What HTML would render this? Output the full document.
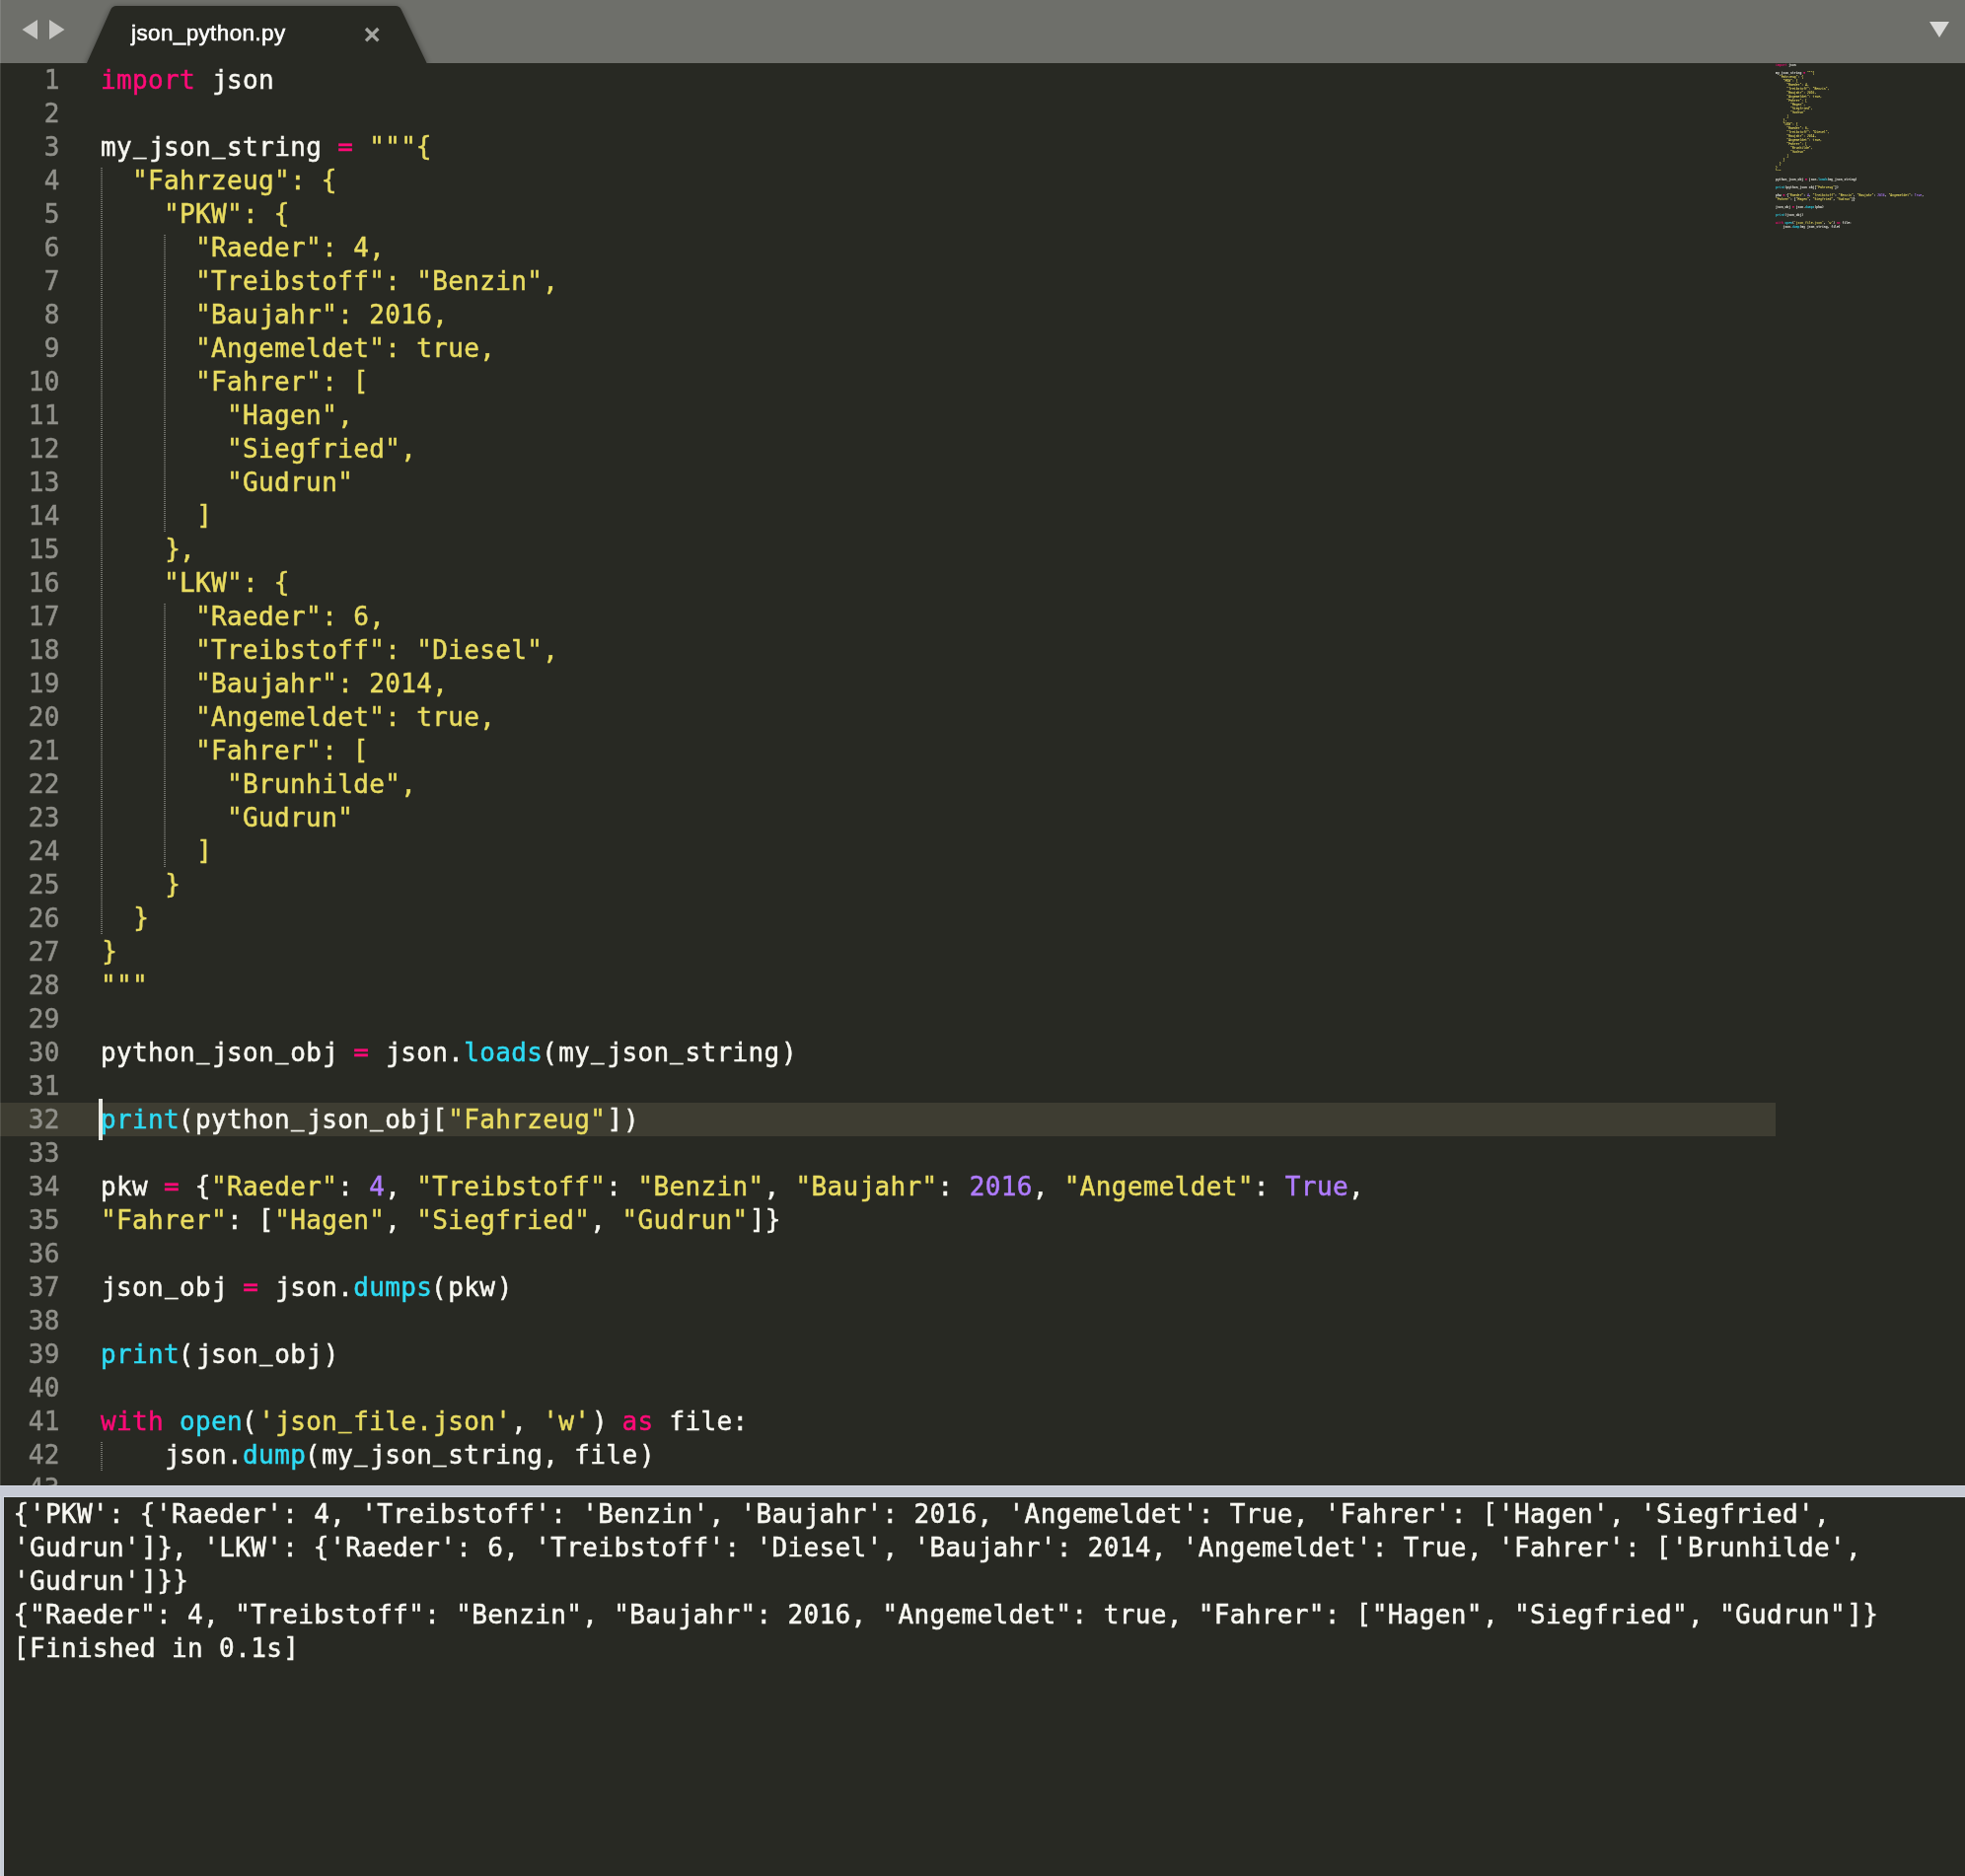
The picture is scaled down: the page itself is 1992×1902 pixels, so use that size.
<!DOCTYPE html>
<html><head><meta charset="utf-8"><title>json_python.py</title>
<style>
html,body{margin:0;padding:0}
body{width:1992px;height:1902px;background:#282923;overflow:hidden;position:relative;font-family:"DejaVu Sans Mono","Liberation Mono",monospace;}
#tabbar{position:absolute;left:0;top:0;width:1992px;height:64px;background:#6e6f6a}
#tabsvg{position:absolute;left:0;top:0}
#title{position:absolute;left:132.6px;letter-spacing:0.42px;top:19px;-webkit-text-stroke:0.55px;will-change:transform;font-family:"Liberation Sans",sans-serif;font-size:22.4px;line-height:30px;color:#fff;white-space:pre}
#editor{position:absolute;left:0;top:64px;width:1992px;height:1442px;overflow:hidden;background:#282923}
.mono{font-size:26px;line-height:34px;letter-spacing:0.3557px;color:#f8f8f2;-webkit-text-stroke:0.5px;will-change:transform}
.l{height:34px;white-space:pre}
#hl{position:absolute;left:0;top:1054px;width:1800px;height:34px;background:#3e3d32}
#nums{position:absolute;left:0;top:0;width:60.85px;text-align:right;color:#90908a}
#code{position:absolute;left:102px;top:0}
.l i,.l em{font-style:normal;position:relative;top:-1.2px;left:-0.4px}
.l em{left:1.2px}
.l u{text-decoration:none;display:inline-block;transform:translateY(-2.8px) scaleX(0.86)}
.l b{font-weight:normal;position:relative;left:1.1px}
.l s,.l var{text-decoration:none;font-style:normal;position:relative;left:-1.2px}
.l var{left:1.5px}
.k{color:#ff0a78}.s{color:#e9dc60}.f{color:#2edbf4}.n{color:#b07cff}
.g{position:absolute;width:2px;background:repeating-linear-gradient(to bottom,#70716b 0,#70716b 1px,transparent 1px,transparent 2px)}
#cursor{position:absolute;left:100px;top:1114px;width:4px;height:42px;background:#e8e8e1}
#mini{position:absolute;left:1800px;top:64px;transform-origin:0 0;transform:scale(0.1172,0.1176)}
#band{position:absolute;left:0;top:1506px;width:1992px;height:12px;background:#c7cbd5;box-sizing:border-box;border-top:1px solid #d2d7e1;border-bottom:1px solid #d2d7e1}
#strip{position:absolute;left:0;top:1517px;width:4px;height:385px;background:#c7cbd5;box-sizing:border-box;border-right:1px solid #d2d7e1;border-left:1px solid #ccd1d8}
#out{position:absolute;left:14px;top:1518px}
#edge{position:absolute;left:0;top:0;width:1px;height:1506px;background:rgba(255,255,255,0.12)}
</style></head><body>
<div id="tabbar"></div>
<svg id="tabsvg" width="1992" height="64" viewBox="0 0 1992 64">
<defs><filter id="sh" x="-5%" y="-20%" width="110%" height="140%"><feGaussianBlur stdDeviation="2.5"/></filter></defs>
<path d="M86 66 L110 12 Q113 6 120 6 L399 6 Q406 6 409 12 L435 66 Z" fill="#000" opacity="0.28" filter="url(#sh)"/>
<path d="M88 64 L112.4 9.6 Q114 6 118 6 L401 6 Q405 6 406.6 9.6 L432.6 64 Z" fill="#282923"/>
<path d="M22.5 30 L38 20 L38 40 Z" fill="#c5c5c2"/>
<path d="M65.5 30 L50 20 L50 40 Z" fill="#c5c5c2"/>
<path d="M1956 22 L1976 22 L1966 38 Z" fill="#d9d9d7"/>
<path d="M371 29 L383.4 41.4 M383.4 29 L371 41.4" stroke="#a3a49f" stroke-width="3.3" fill="none"/>
</svg>
<div id="title">json_python.py</div>
<div id="editor">
<div id="hl"></div>
<div id="nums" class="mono">
<div class="l">1</div>
<div class="l">2</div>
<div class="l">3</div>
<div class="l">4</div>
<div class="l">5</div>
<div class="l">6</div>
<div class="l">7</div>
<div class="l">8</div>
<div class="l">9</div>
<div class="l">10</div>
<div class="l">11</div>
<div class="l">12</div>
<div class="l">13</div>
<div class="l">14</div>
<div class="l">15</div>
<div class="l">16</div>
<div class="l">17</div>
<div class="l">18</div>
<div class="l">19</div>
<div class="l">20</div>
<div class="l">21</div>
<div class="l">22</div>
<div class="l">23</div>
<div class="l">24</div>
<div class="l">25</div>
<div class="l">26</div>
<div class="l">27</div>
<div class="l">28</div>
<div class="l">29</div>
<div class="l">30</div>
<div class="l">31</div>
<div class="l">32</div>
<div class="l">33</div>
<div class="l">34</div>
<div class="l">35</div>
<div class="l">36</div>
<div class="l">37</div>
<div class="l">38</div>
<div class="l">39</div>
<div class="l">40</div>
<div class="l">41</div>
<div class="l">42</div>
<div class="l">43</div>
</div>
<div id="code" class="mono">
<div class="l"><span class="k">import</span> <b>j</b>son</div>
<div class="l">&nbsp;</div>
<div class="l">my<u>_</u><b>j</b>son<u>_</u>string <span class="k">=</span> <span class="s">"""<i>{</i></span></div>
<div class="l"><span class="s">  "Fahrzeug": <i>{</i></span></div>
<div class="l"><span class="s">    "PKW": <i>{</i></span></div>
<div class="l"><span class="s">      "Raeder": 4,</span></div>
<div class="l"><span class="s">      "Treibstoff": "Benzin",</span></div>
<div class="l"><span class="s">      "Bau<b>j</b>ahr": 2016,</span></div>
<div class="l"><span class="s">      "Angemeldet": true,</span></div>
<div class="l"><span class="s">      "Fahrer": <i>[</i></span></div>
<div class="l"><span class="s">        "Hagen",</span></div>
<div class="l"><span class="s">        "Siegfried",</span></div>
<div class="l"><span class="s">        "Gudrun"</span></div>
<div class="l"><span class="s">      <em>]</em></span></div>
<div class="l"><span class="s">    <em>}</em>,</span></div>
<div class="l"><span class="s">    "LKW": <i>{</i></span></div>
<div class="l"><span class="s">      "Raeder": 6,</span></div>
<div class="l"><span class="s">      "Treibstoff": "Diesel",</span></div>
<div class="l"><span class="s">      "Bau<b>j</b>ahr": 2014,</span></div>
<div class="l"><span class="s">      "Angemeldet": true,</span></div>
<div class="l"><span class="s">      "Fahrer": <i>[</i></span></div>
<div class="l"><span class="s">        "Brunhilde",</span></div>
<div class="l"><span class="s">        "Gudrun"</span></div>
<div class="l"><span class="s">      <em>]</em></span></div>
<div class="l"><span class="s">    <em>}</em></span></div>
<div class="l"><span class="s">  <em>}</em></span></div>
<div class="l"><span class="s"><em>}</em></span></div>
<div class="l"><span class="s">"""</span></div>
<div class="l">&nbsp;</div>
<div class="l">python<u>_</u><b>j</b>son<u>_</u>ob<b>j</b> <span class="k">=</span> <b>j</b>son.<span class="f">loads</span><s>(</s>my<u>_</u><b>j</b>son<u>_</u>string<var>)</var></div>
<div class="l">&nbsp;</div>
<div class="l"><span class="f">print</span><s>(</s>python<u>_</u><b>j</b>son<u>_</u>ob<b>j</b><i>[</i><span class="s">"Fahrzeug"</span><em>]</em><var>)</var></div>
<div class="l">&nbsp;</div>
<div class="l">pkw <span class="k">=</span> <i>{</i><span class="s">"Raeder"</span>: <span class="n">4</span>, <span class="s">"Treibstoff"</span>: <span class="s">"Benzin"</span>, <span class="s">"Bau<b>j</b>ahr"</span>: <span class="n">2016</span>, <span class="s">"Angemeldet"</span>: <span class="n">True</span>,</div>
<div class="l"><span class="s">"Fahrer"</span>: <i>[</i><span class="s">"Hagen"</span>, <span class="s">"Siegfried"</span>, <span class="s">"Gudrun"</span><em>]}</em></div>
<div class="l">&nbsp;</div>
<div class="l"><b>j</b>son<u>_</u>ob<b>j</b> <span class="k">=</span> <b>j</b>son.<span class="f">dumps</span><s>(</s>pkw<var>)</var></div>
<div class="l">&nbsp;</div>
<div class="l"><span class="f">print</span><s>(</s><b>j</b>son<u>_</u>ob<b>j</b><var>)</var></div>
<div class="l">&nbsp;</div>
<div class="l"><span class="k">with</span> <span class="f">open</span><s>(</s><span class="s">'<b>j</b>son<u>_</u>file.<b>j</b>son'</span>, <span class="s">'w'</span><var>)</var> <span class="k">as</span> file:</div>
<div class="l">    <b>j</b>son.<span class="f">dump</span><s>(</s>my<u>_</u><b>j</b>son<u>_</u>string, file<var>)</var></div>
<div class="l">&nbsp;</div>
</div>
</div>
<div class="g" style="left:102px;top:170px;height:778px"></div>
<div class="g" style="left:166px;top:238px;height:302px"></div>
<div class="g" style="left:166px;top:612px;height:268px"></div>
<div class="g" style="left:102px;top:1462px;height:30px"></div>

<div id="cursor"></div>
<div id="mini" class="mono">
<div class="l"><span class="k">import</span> json</div>
<div class="l">&nbsp;</div>
<div class="l">my_json_string <span class="k">=</span> <span class="s">"""{</span></div>
<div class="l"><span class="s">  "Fahrzeug": {</span></div>
<div class="l"><span class="s">    "PKW": {</span></div>
<div class="l"><span class="s">      "Raeder": 4,</span></div>
<div class="l"><span class="s">      "Treibstoff": "Benzin",</span></div>
<div class="l"><span class="s">      "Baujahr": 2016,</span></div>
<div class="l"><span class="s">      "Angemeldet": true,</span></div>
<div class="l"><span class="s">      "Fahrer": [</span></div>
<div class="l"><span class="s">        "Hagen",</span></div>
<div class="l"><span class="s">        "Siegfried",</span></div>
<div class="l"><span class="s">        "Gudrun"</span></div>
<div class="l"><span class="s">      ]</span></div>
<div class="l"><span class="s">    },</span></div>
<div class="l"><span class="s">    "LKW": {</span></div>
<div class="l"><span class="s">      "Raeder": 6,</span></div>
<div class="l"><span class="s">      "Treibstoff": "Diesel",</span></div>
<div class="l"><span class="s">      "Baujahr": 2014,</span></div>
<div class="l"><span class="s">      "Angemeldet": true,</span></div>
<div class="l"><span class="s">      "Fahrer": [</span></div>
<div class="l"><span class="s">        "Brunhilde",</span></div>
<div class="l"><span class="s">        "Gudrun"</span></div>
<div class="l"><span class="s">      ]</span></div>
<div class="l"><span class="s">    }</span></div>
<div class="l"><span class="s">  }</span></div>
<div class="l"><span class="s">}</span></div>
<div class="l"><span class="s">"""</span></div>
<div class="l">&nbsp;</div>
<div class="l">python_json_obj <span class="k">=</span> json.<span class="f">loads</span>(my_json_string)</div>
<div class="l">&nbsp;</div>
<div class="l"><span class="f">print</span>(python_json_obj[<span class="s">"Fahrzeug"</span>])</div>
<div class="l">&nbsp;</div>
<div class="l">pkw <span class="k">=</span> {<span class="s">"Raeder"</span>: <span class="n">4</span>, <span class="s">"Treibstoff"</span>: <span class="s">"Benzin"</span>, <span class="s">"Baujahr"</span>: <span class="n">2016</span>, <span class="s">"Angemeldet"</span>: <span class="n">True</span>,</div>
<div class="l"><span class="s">"Fahrer"</span>: [<span class="s">"Hagen"</span>, <span class="s">"Siegfried"</span>, <span class="s">"Gudrun"</span>]}</div>
<div class="l">&nbsp;</div>
<div class="l">json_obj <span class="k">=</span> json.<span class="f">dumps</span>(pkw)</div>
<div class="l">&nbsp;</div>
<div class="l"><span class="f">print</span>(json_obj)</div>
<div class="l">&nbsp;</div>
<div class="l"><span class="k">with</span> <span class="f">open</span>(<span class="s">'json_file.json'</span>, <span class="s">'w'</span>) <span class="k">as</span> file:</div>
<div class="l">    json.<span class="f">dump</span>(my_json_string, file)</div>
</div>
<div id="edge"></div>
<div id="band"></div>
<div id="strip"></div>
<div id="out" class="mono">
<div class="l"><i>{</i>'PKW': <i>{</i>'Raeder': 4, 'Treibstoff': 'Benzin', 'Bau<b>j</b>ahr': 2016, 'Angemeldet': True, 'Fahrer': <i>[</i>'Hagen', 'Siegfried',</div>
<div class="l">'Gudrun'<em>]}</em>, 'LKW': <i>{</i>'Raeder': 6, 'Treibstoff': 'Diesel', 'Bau<b>j</b>ahr': 2014, 'Angemeldet': True, 'Fahrer': <i>[</i>'Brunhilde',</div>
<div class="l">'Gudrun'<em>]}}</em></div>
<div class="l"><i>{</i>"Raeder": 4, "Treibstoff": "Benzin", "Bau<b>j</b>ahr": 2016, "Angemeldet": true, "Fahrer": <i>[</i>"Hagen", "Siegfried", "Gudrun"<em>]}</em></div>
<div class="l"><i>[</i>Finished in 0.1s<em>]</em></div>
</div>
</body></html>
